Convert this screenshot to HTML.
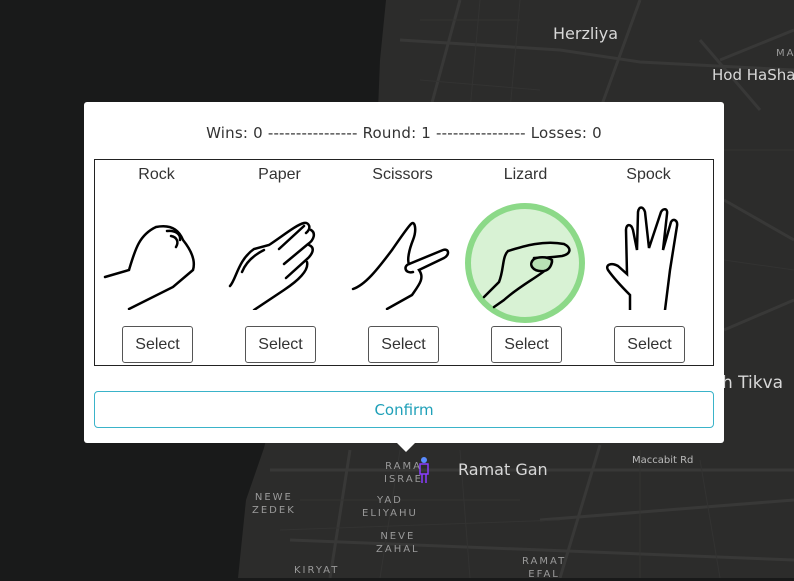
<!DOCTYPE html>
<html><head><meta charset="utf-8"><style>
*{margin:0;padding:0;box-sizing:border-box}
body{width:794px;height:578px;overflow:hidden;background:#191a1a;font-family:"Liberation Sans",sans-serif;position:relative}
.map{position:absolute;left:0;top:0}
.lbl{position:absolute;color:#d8d8d8;font-family:"DejaVu Sans","Liberation Sans",sans-serif;white-space:nowrap}
.sm{font-size:10px;letter-spacing:2px;color:#9a9a9a;text-align:center;line-height:13px}
.pop{position:absolute;left:84px;top:102px;width:640px;height:341px;background:#fff;border-radius:3px}
.arrow{position:absolute;left:396px;top:442px;width:0;height:0;border-left:10px solid transparent;border-right:10px solid transparent;border-top:10px solid #fff}
.score{position:absolute;left:0;width:640px;top:22px;text-align:center;font-size:15px;color:#333;font-family:"DejaVu Sans",sans-serif;letter-spacing:0.2px;white-space:nowrap}
.box{position:absolute;left:10px;top:57px;width:620px;height:207px;border:1px solid #222}
.col{position:absolute;top:0;width:123px;height:205px;text-align:center}
.col .t{position:absolute;top:6px;width:100%;font-size:16px;color:#333}
.col svg{position:absolute;left:6px;top:40px}
.sel{position:absolute;left:27px;top:166px;width:71px;height:37px;border:1px solid #555;border-radius:3px;font-size:16px;color:#333;line-height:35px;background:#fff;font-family:"Liberation Sans",sans-serif}
.conf{position:absolute;left:10px;top:289px;width:620px;height:37px;border:1px solid #3ab3c9;border-radius:4px;text-align:center;line-height:37px;color:#1fa0b8;font-size:15px;font-family:"DejaVu Sans",sans-serif}
</style></head><body>
<svg class="map" width="794" height="578">
<polygon points="386,0 794,0 794,578 238,578 246,500 264,448 300,300 360,160 378,110 380,60" fill="#2c2c2b"/>
<g stroke="#383837" stroke-width="3" fill="none">
<path d="M400,40 L560,50 L640,62 L794,70"/><path d="M460,0 L430,110"/><path d="M640,0 L600,110"/><path d="M700,40 L760,110"/>
<path d="M270,470 L794,470"/><path d="M350,450 L330,578"/><path d="M540,520 L794,500"/><path d="M560,578 L600,445"/><path d="M720,60 L794,30"/>
<path d="M724,200 L794,240"/><path d="M724,330 L794,300"/><path d="M290,540 L794,560"/>
</g>
<g stroke="#333332" stroke-width="1" fill="none">
<path d="M420,20 L520,20 M420,80 L540,90 M480,0 L470,110 M520,0 L510,110 M300,500 L520,500 M280,530 L560,520 M400,450 L380,578 M460,450 L470,578 M640,450 L640,578 M700,460 L720,578 M724,150 L794,150 M724,260 L794,270"/>
</g>
</svg>
<div class="lbl" style="left:553px;top:24px;font-size:16px">Herzliya</div>
<div class="lbl" style="left:712px;top:66px;font-size:15px">Hod HaShare</div>
<div class="lbl" style="left:776px;top:48px;font-size:10px;color:#999;letter-spacing:2px">MA</div>
<div class="lbl" style="left:722px;top:373px;font-size:17px">h Tikva</div>
<div class="lbl" style="left:458px;top:460px;font-size:16px">Ramat Gan</div>
<div class="lbl" style="left:632px;top:455px;font-size:10px;color:#bbb">Maccabit Rd</div>
<div class="lbl sm" style="left:384px;top:460px">RAMA<br>ISRAE</div>
<div class="lbl sm" style="left:252px;top:491px">NEWE<br>ZEDEK</div>
<div class="lbl sm" style="left:362px;top:494px">YAD<br>ELIYAHU</div>
<div class="lbl sm" style="left:376px;top:530px">NEVE<br>ZAHAL</div>
<div class="lbl sm" style="left:294px;top:564px">KIRYAT</div>
<div class="lbl sm" style="left:522px;top:555px">RAMAT<br>EFAL</div>
<svg style="position:absolute;left:418px;top:456px" width="12" height="28"><circle cx="6" cy="4" r="3" fill="#5a8cff"/><rect x="2" y="8" width="8" height="10" fill="none" stroke="#8a3cff" stroke-width="1.5"/><path d="M4,18 V27 M8,18 V27" stroke="#8a3cff" stroke-width="1.5"/></svg>
<div class="arrow"></div>
<div class="pop">
<div class="score">Wins: 0 ---------------- Round: 1 ---------------- Losses: 0</div>
<div class="box">
<div class="col" style="left:0px"><div class="t">Rock</div>
<svg width="110" height="110" viewBox="0 0 110 110" fill="none" stroke="#000" stroke-width="2.5" stroke-linecap="round"><path d="M4,77 L28,70 C34,50 38,35 55,27 C70,24 78,30 82,40 C90,50 95,60 92,70 L72,87 L28,109"/><path d="M66,31 C74,30 80,34 79,40 M70,36 C76,37 78,42 75,47"/></svg>
<button class="sel">Select</button></div>
<div class="col" style="left:123px"><div class="t">Paper</div>
<svg width="110" height="110" viewBox="0 0 110 110" fill="none" stroke="#000" stroke-width="2.5" stroke-linecap="round"><path d="M6,86 C12,80 14,60 30,49 L45,45 C60,35 72,25 80,23 C85,22 88,28 82,33 M87,30 C92,33 90,40 84,44 L60,64 M85,45 C92,48 88,55 82,60 L62,78 M83,62 C85,70 75,80 60,90 L30,110"/><path d="M80,26 L55,49 M18,72 C22,62 30,55 40,50"/></svg>
<button class="sel">Select</button></div>
<div class="col" style="left:246px"><div class="t">Scissors</div>
<svg width="110" height="110" viewBox="0 0 110 110" fill="none" stroke="#000" stroke-width="2.5" stroke-linecap="round"><path d="M6,89 C18,85 30,70 45,50 C52,40 60,28 64,24 C68,20 70,30 66,40 C62,50 60,60 62,64 L96,50 C102,48 103,55 97,58 L72,70 C78,78 72,85 65,95 L40,109"/><path d="M62,64 C56,66 58,74 66,72"/></svg>
<button class="sel">Select</button></div>
<div class="col" style="left:369px"><div class="t">Lizard</div>
<svg width="123" height="130" viewBox="0 0 123 130" style="left:0;top:42px" fill="none" stroke="#000" stroke-width="2.5" stroke-linecap="round"><circle cx="61" cy="61" r="57" fill="#d8f2d4" stroke="#8cd988" stroke-width="6"/><path d="M20,95 L35,80 C40,68 38,55 44,49 C60,44 80,38 100,42 C108,46 107,52 98,54 C90,55 80,56 70,56 M88,60 C85,70 60,80 40,98 L30,105"/><path d="M70,57 C64,62 68,70 80,69 C86,68 88,62 88,58 C82,54 74,55 70,57" fill="#b8e0b4"/></svg>
<button class="sel">Select</button></div>
<div class="col" style="left:492px"><div class="t">Spock</div>
<svg width="110" height="110" viewBox="0 0 110 110" fill="none" stroke="#000" stroke-width="2.5" stroke-linecap="round"><path d="M37,113 L37,95 C30,88 22,80 15,70 C12,65 18,62 25,66 L34,74 L33,30 C33,24 38,23 40,30 L44,50 L45,12 C46,6 50,6 52,12 L56,48 L68,12 C70,8 75,8 74,14 L70,50 L78,22 C80,18 85,20 84,26 L77,70 L72,110"/></svg>
<button class="sel">Select</button></div>
</div>
<div class="conf">Confirm</div>
</div>
</body></html>
